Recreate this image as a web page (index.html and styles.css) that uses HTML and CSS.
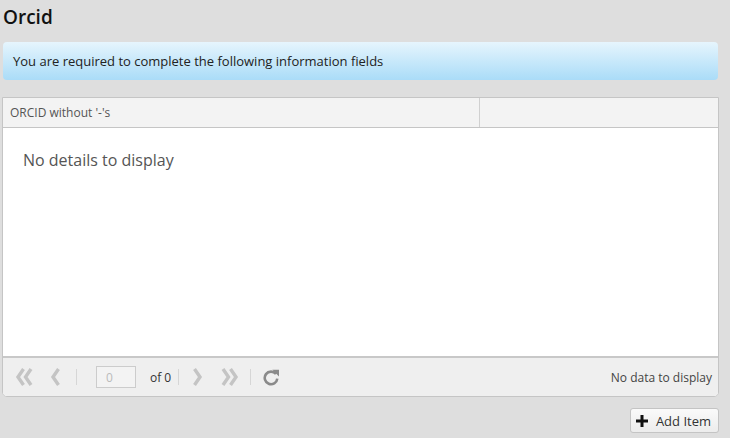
FILE: index.html
```html
<!DOCTYPE html>
<html lang="en">
<head>
  <meta charset="UTF-8">
  <title>Orcid</title>
  <link rel="stylesheet" href="styles.css">
</head>
<body>
  <h1 class="title">Orcid</h1>

  <div class="info">You are required to complete the following information fields</div>

  <div class="grid">
    <div class="grid-head">
      <div class="col col-main">ORCID without '-'s</div>
      <div class="col col-rest"></div>
    </div>
    <div class="grid-body">
      <div class="empty">No details to display</div>
    </div>
    <div class="grid-pager">
      <span class="pg-btn pg-first">
        <svg width="18" height="20" viewBox="0 0 18 20"><path d="M8.5 2 L3 10 L8.5 18 M16 2 L10.5 10 L16 18" fill="none" stroke="#c4c4c4" stroke-width="3.4"/></svg>
      </span>
      <span class="pg-btn pg-prev">
        <svg width="11" height="20" viewBox="0 0 11 20"><path d="M8.5 2 L3 10 L8.5 18" fill="none" stroke="#c4c4c4" stroke-width="3.4"/></svg>
      </span>
      <span class="pg-sep"></span>
      <input class="pg-input" type="text" value="0">
      <span class="pg-of">of 0</span>
      <span class="pg-sep"></span>
      <span class="pg-btn pg-next">
        <svg width="11" height="20" viewBox="0 0 11 20"><path d="M2.5 2 L8 10 L2.5 18" fill="none" stroke="#c4c4c4" stroke-width="3.4"/></svg>
      </span>
      <span class="pg-btn pg-last">
        <svg width="18" height="20" viewBox="0 0 18 20"><path d="M2 2 L7.5 10 L2 18 M9.5 2 L15 10 L9.5 18" fill="none" stroke="#c4c4c4" stroke-width="3.4"/></svg>
      </span>
      <span class="pg-sep"></span>
      <span class="pg-btn pg-refresh">
        <svg width="18" height="18" viewBox="0 0 18 18"><path d="M14 6 A6.3 6.3 0 1 0 15.3 10.6" fill="none" stroke="#8a8a8a" stroke-width="2.6"/><path d="M10.3 1.8 L17 1.8 L17 8.5 Z" fill="#8a8a8a"/></svg>
      </span>
      <span class="pg-info">No data to display</span>
    </div>
  </div>

  <div class="actions">
    <button class="add-btn">
      <svg width="12" height="12" viewBox="0 0 12 12"><path d="M6 0 V12 M0 6 H12" stroke="#111" stroke-width="3"/></svg>
      Add Item
    </button>
  </div>
</body>
</html>
```

FILE: styles.css
```css
body {
  margin: 0;
  padding: 0 11px 0 2px;
  background: #dedede;
  font-family: "Open Sans", Arial, sans-serif;
  color: #333;
}
.title {
  margin: 0;
  padding: 4px 0 0 1px;
  height: 42px;
  box-sizing: border-box;
  font-size: 19px;
  font-weight: 600;
  color: #111;
  line-height: 26px;
}
.info {
  margin: 0 1px 0 1px;
  height: 38px;
  box-sizing: border-box;
  padding: 10px 10px 0 10px;
  font-size: 13px;
  line-height: 18px;
  color: #222;
  border-radius: 4px;
  background: linear-gradient(to bottom, #e6f5fd, #aadcf8);
}
.grid {
  margin-top: 17px;
  height: 298px;
  border: 1px solid #c5c5c5;
  border-radius: 0 0 5px 5px;
  background: #fff;
  display: flex;
  flex-direction: column;
  overflow: hidden;
}
.grid-head {
  display: flex;
  height: 29px;
  background: #f3f3f3;
  border-bottom: 1px solid #c5c5c5;
}
.col {
  font-size: 12px;
  color: #555;
  line-height: 29px;
  padding-left: 7px;
}
.col-main {
  width: 469px;
  border-right: 1px solid #d0d0d0;
}
.col-rest {
  flex: 1;
}
.grid-body {
  flex: 1;
}
.empty {
  padding: 21px 0 0 20px;
  font-size: 16px;
  color: #555;
}
.grid-pager {
  height: 38px;
  border-top: 2px solid #c8c8c8;
  background: #efefef;
  display: flex;
  align-items: center;
  padding: 0 6px 0 12px;
  font-size: 12px;
}
.pg-btn {
  display: flex;
  align-items: center;
}
.pg-first { margin-right: 17px; }
.pg-prev { margin-right: 15px; }
.pg-next { margin-right: 18px; }
.pg-last { margin-right: 11px; }
.pg-sep {
  width: 1px;
  height: 16px;
  background: #d6d6d6;
}
.pg-input {
  width: 40px;
  height: 22px;
  box-sizing: border-box;
  margin: 0 14px 0 19px;
  border: 1px solid #ccc;
  background: #f3f3f3;
  color: #bbb;
  font-family: "Open Sans", Arial, sans-serif;
  font-size: 12px;
  padding: 0 0 0 9px;
}
.pg-of {
  color: #333;
  margin-right: 7px;
}
.pg-of + .pg-sep {
  margin-right: 13px;
}
.pg-last + .pg-sep {
  margin-right: 11px;
}
.pg-info {
  margin-left: auto;
  color: #444;
}
.actions {
  display: flex;
  justify-content: flex-end;
  padding-top: 11px;
}
.add-btn {
  display: flex;
  align-items: center;
  gap: 8px;
  height: 25px;
  padding: 0 7px 0 5px;
  border: 1px solid #c4c4c4;
  border-radius: 3px;
  background: linear-gradient(to bottom, #fafafa, #ececec);
  font-family: "Open Sans", Arial, sans-serif;
  font-size: 13px;
  color: #333;
}
```
